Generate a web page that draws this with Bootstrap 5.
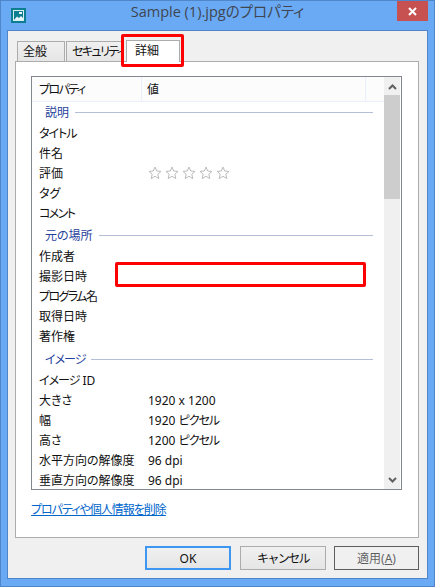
<!DOCTYPE html>
<html lang="ja">
<head>
<meta charset="utf-8">
<title>Sample (1).jpgのプロパティ</title>
<link href="https://cdn.jsdelivr.net/npm/bootstrap@5.3.0/dist/css/bootstrap.min.css" rel="stylesheet">
<style>
html,body{margin:0;height:587px;overflow:hidden;background:#fff}
body{font-family:"Noto Sans","Noto Sans CJK JP",sans-serif;font-size:12px;color:#111;line-height:20px;font-feature-settings:"palt"}
.ka{letter-spacing:-1.6px}
.ka2{letter-spacing:-1px}
.win{position:relative;width:435px;height:587px;background:#6aaaf5;border:1px solid #4f86c9;padding:0 6px 7px}
.titlebar{height:29px;position:relative}
.wicon{width:15px;height:15px;margin-left:4px;margin-top:7px}
.wtitle{font-family:"Open Sans","Noto Sans CJK JP",sans-serif;font-size:14.5px;color:#3f4650;line-height:1;padding-top:4px;padding-right:19px}
.closebtn{position:absolute;top:0;right:0;width:31px;height:20px;background:#c75050;display:flex;align-items:center;justify-content:center}
.client{height:549px;background:#f0f0f0;border:1px solid #4f86c9;padding:8px 8px 0 7px}
.tabstrip{height:22px;align-items:flex-end;padding-left:2px}
.tb{height:20px;background:linear-gradient(#f0f0f0,#e5e5e5);border:1px solid #acacac;border-bottom:0;padding:0 0 0 5px;line-height:19px;margin-right:1px;overflow:hidden;white-space:nowrap}
.tb1{width:48px}
.tb2{width:58px;border-right:0;margin-right:0}
.tb3{width:54px;height:22px;background:#fff;padding-left:8px;line-height:20px;margin-left:2px;border-bottom:0;margin-bottom:-1px;position:relative;z-index:2}
.panel{height:477px;width:404px;background:#fff;border:1px solid #acacac;padding:14px 15px 0 15px}
.listbox{height:414px;width:371px;border:1px solid #828790;overflow:hidden}
.hdr{height:25px;width:352px;background:#fcfcfc;border-bottom:1px solid #e8f0fb;line-height:25px}
.hc1{width:110px;padding-left:7px;border-right:1px solid #e8f0fb}
.hc2{width:224px;padding-left:5px;border-right:1px solid #e8f0fb}
.listmain{width:352px;height:412px;overflow:hidden}
.pr{height:20px;padding-left:7px;white-space:nowrap;line-height:22px}
.pn{width:109px;flex:none}
.sec{color:#1f3f9b;padding-left:13px;height:21px;width:341px}
.sec2{margin-top:2px}
.sec3{margin-top:3px}
.secline{flex:1;height:1px;background:#b4bed8;margin-left:6px}
.sbar{width:16px;margin-left:auto;background:#f0f0f0;height:412px;margin-right:1px}
.sarrow{height:18px}
.sthumb{height:104px;background:#cdcdcd}
.delink{display:block;margin-top:10px;color:#0066cc;text-decoration:underline;line-height:20px;width:max-content}
.foot{height:23px;margin-top:8px;padding-left:130px}
.wbtn{width:86px;height:24px;padding:0;border-radius:0;border:1px solid #acacac;background:linear-gradient(#f0f0f0,#e5e5e5);color:#111;font-size:12px;line-height:19px;font-family:inherit}
.wbtn-def{border:2px solid #3d97f2}
.wbtn-c{margin-left:9px}
.wbtn-a{margin-left:8px;background:#efefef;border-color:#d9d9d9;color:#9b9b9b;width:85px}
.redbox{position:absolute;border:3px solid #f00;border-radius:2px;z-index:5}
.rb1{left:120px;top:33px;width:63px;height:33px}
.rb2{left:114px;top:261px;width:251px;height:25px}
</style>
</head>
<body>
<div class="win">
  <div class="titlebar d-flex">
    <svg class="wicon" viewBox="0 0 15 15"><rect width="15" height="15" fill="#0b7f90"/><rect x="2" y="2" width="11" height="11" fill="#d8eef2"/><rect x="3" y="3" width="9" height="9" fill="#0b7f90"/><path d="M3 12 6 8.5 8 10 10 8 12 10V12Z" fill="#e8f6f8"/><rect x="8" y="4" width="3" height="2" fill="#e8f6f8"/></svg>
    <div class="wtitle flex-grow-1 text-center">Sample (1).jpgのプロパティ</div>
    <div class="closebtn"><svg width="9" height="9" viewBox="0 0 9 9"><path d="M1 1 8 8M8 1 1 8" stroke="#fff" stroke-width="2"/></svg></div>
  </div>
  <div class="client">
    <div class="tabstrip d-flex">
      <div class="tb tb1">全般</div>
      <div class="tb tb2"><span class="ka">セキュリティ</span></div>
      <div class="tb tb3">詳細</div>
    </div>
    <div class="panel">
      <div class="listbox d-flex">
        <div class="listmain">
          <div class="hdr d-flex"><div class="hc1"><span class="ka">プロパティ</span></div><div class="hc2">値</div></div>
          <div class="sec d-flex align-items-center"><span>説明</span><span class="secline"></span></div>
          <div class="pr d-flex"><span class="pn ka2">タイトル</span></div>
          <div class="pr d-flex"><span class="pn">件名</span></div>
          <div class="pr d-flex"><span class="pn">評価</span>
            <svg class="align-self-center" width="83" height="14" viewBox="0 0 83 14" fill="#fff" stroke="#bcbcbc" stroke-width="1"><defs><path id="st" d="M7 1 8.7 5 13 5.4 9.8 8.2 10.8 12.6 7 10.3 3.2 12.6 4.2 8.2 1 5.4 5.3 5Z"/></defs><use href="#st"/><use href="#st" x="17"/><use href="#st" x="34"/><use href="#st" x="51"/><use href="#st" x="68"/></svg>
          </div>
          <div class="pr d-flex"><span class="pn">タグ</span></div>
          <div class="pr d-flex"><span class="pn ka">コメント</span></div>
          <div class="sec sec2 d-flex align-items-center"><span>元の場所</span><span class="secline"></span></div>
          <div class="pr d-flex"><span class="pn">作成者</span></div>
          <div class="pr d-flex"><span class="pn">撮影日時</span></div>
          <div class="pr d-flex"><span class="pn ka">プログラム名</span></div>
          <div class="pr d-flex"><span class="pn">取得日時</span></div>
          <div class="pr d-flex"><span class="pn">著作権</span></div>
          <div class="sec sec3 d-flex align-items-center"><span class="ka2">イメージ</span><span class="secline"></span></div>
          <div class="pr d-flex"><span class="pn"><span class="ka2">イメージ</span> ID</span></div>
          <div class="pr d-flex"><span class="pn">大きさ</span><span>1920 x 1200</span></div>
          <div class="pr d-flex"><span class="pn">幅</span><span>1920 <span class="ka2">ピクセル</span></span></div>
          <div class="pr d-flex"><span class="pn">高さ</span><span>1200 <span class="ka2">ピクセル</span></span></div>
          <div class="pr d-flex"><span class="pn">水平方向の解像度</span><span>96 dpi</span></div>
          <div class="pr d-flex"><span class="pn">垂直方向の解像度</span><span>96 dpi</span></div>
        </div>
        <div class="sbar d-flex flex-column">
          <div class="sarrow d-flex align-items-center justify-content-center"><svg width="9" height="7" viewBox="0 0 9 7"><path d="M1 6 4.5 2.5 8 6" fill="none" stroke="#606060" stroke-width="2"/></svg></div>
          <div class="sthumb"></div>
          <div class="sarrow d-flex align-items-center justify-content-center mt-auto"><svg width="9" height="7" viewBox="0 0 9 7"><path d="M1 1 4.5 4.5 8 1" fill="none" stroke="#606060" stroke-width="2"/></svg></div>
        </div>
      </div>
      <a class="delink ka2" href="#">プロパティや個人情報を削除</a>
    </div>
    <div class="foot d-flex">
      <button type="button" class="btn wbtn wbtn-def">OK</button>
      <button type="button" class="btn wbtn wbtn-c"><span class="ka">キャンセル</span></button>
      <button type="button" class="btn wbtn wbtn-a" disabled>適用(<u>A</u>)</button>
    </div>
  </div>
  <div class="redbox rb1"></div>
  <div class="redbox rb2"></div>
</div>
<script src="https://cdn.jsdelivr.net/npm/bootstrap@5.3.0/dist/js/bootstrap.bundle.min.js"></script>
</body>
</html>
